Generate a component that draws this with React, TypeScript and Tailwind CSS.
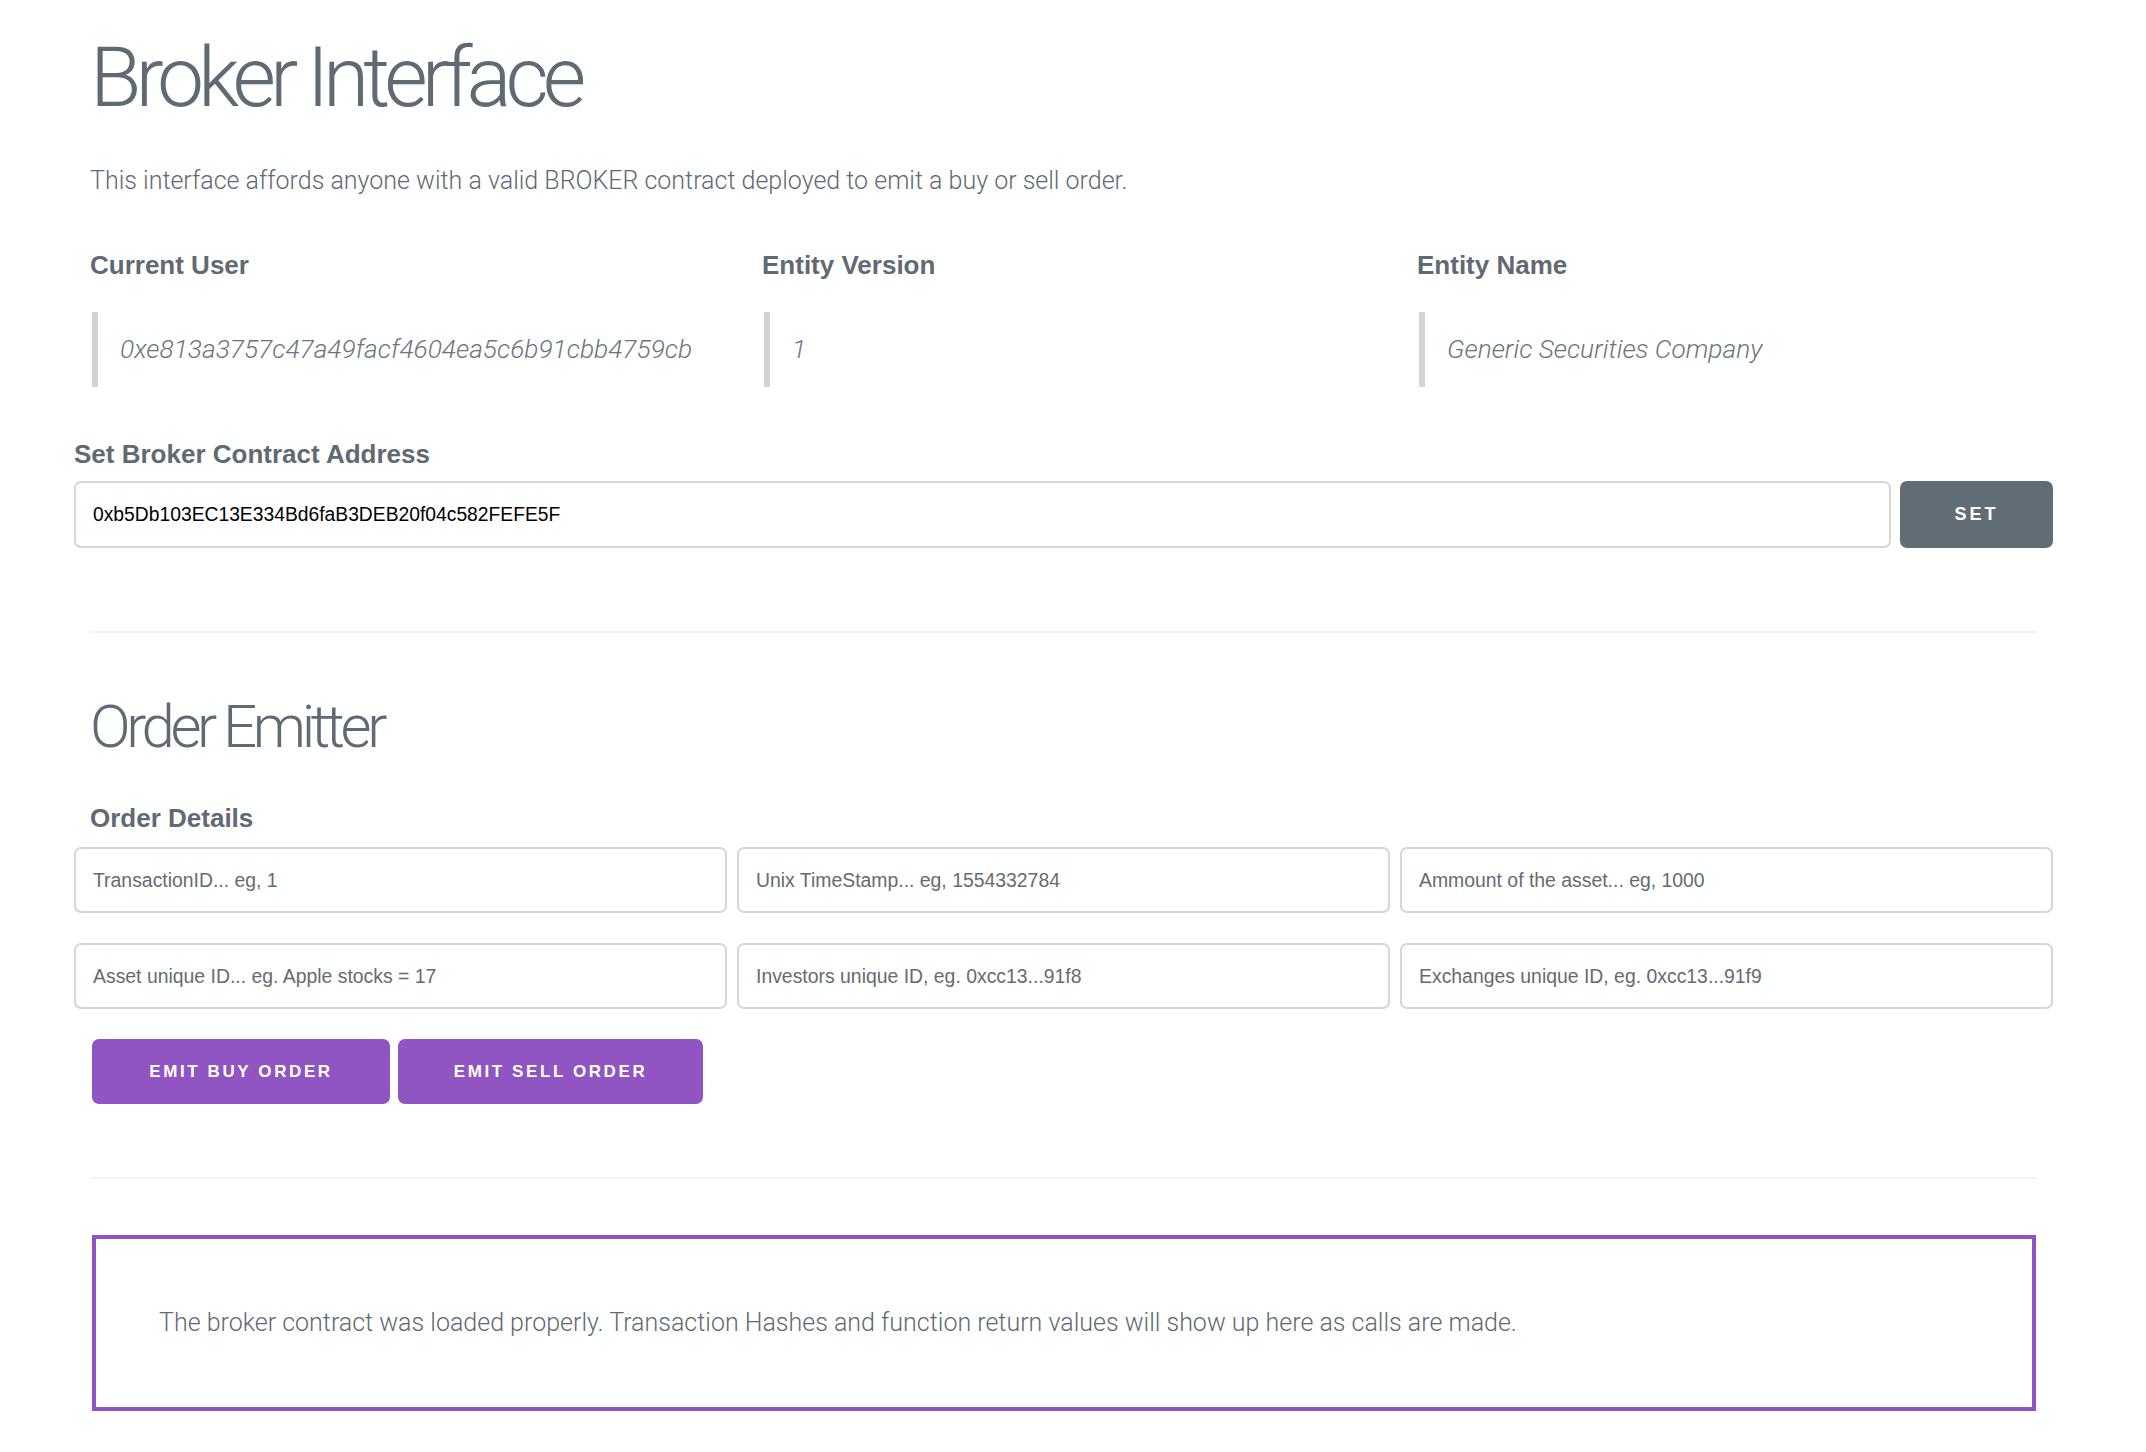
import React from "react";

const light = { fontFamily: "Roboto, 'Liberation Sans', sans-serif" };

function Stat({ label, value, w }: { label: string; value: string; w: string }) {
  return (
    <div className={`${w} shrink-0`}>
      <div className="font-['Liberation_Sans',sans-serif] text-[26px] font-bold leading-none text-[#5f6a73]">{label}</div>
      <div className="ml-[2px] mt-[34px] flex h-[75px] items-center border-l-[6px] border-[#d3d3d3] pl-[22px]">
        <span className="text-[26.3px] font-light italic text-[#6b747c]" style={light}>{value}</span>
      </div>
    </div>
  );
}

function Field({ placeholder }: { placeholder: string }) {
  return (
    <input
      placeholder={placeholder}
      className="h-[66px] w-full rounded-[7px] border-2 border-[#d6d6d6] bg-white px-[17px] font-['Liberation_Sans',sans-serif] text-[19.4px] text-black outline-none placeholder:text-[#666b70]"
    />
  );
}

export default function App() {
  return (
    <div className="min-h-[1452px] w-full bg-white">
      <div className="ml-[74px] w-[1979px]">
        <div className="px-[16px]">
          <h1 className="pt-[36px] text-[84px] font-light leading-none tracking-[-6px] text-[#5f6a73]" style={light}>
            Broker Interface
          </h1>
          <p className="mt-[48px] text-[25px] font-light leading-none text-[#5f6a73]" style={light}>
            This interface affords anyone with a valid BROKER contract deployed to emit a buy or sell order.
          </p>
          <div className="mt-[59px] flex">
            <Stat label="Current User" value="0xe813a3757c47a49facf4604ea5c6b91cbb4759cb" w="w-[672px]" />
            <Stat label="Entity Version" value="1" w="w-[655px]" />
            <Stat label="Entity Name" value="Generic Securities Company" w="flex-1" />
          </div>
        </div>

        <div className="mt-[54px] font-['Liberation_Sans',sans-serif] text-[26px] font-bold leading-none text-[#5f6a73]">
          Set Broker Contract Address
        </div>
        <div className="mt-[14px] flex gap-[9px]">
          <input
            defaultValue="0xb5Db103EC13E334Bd6faB3DEB20f04c582FEFE5F"
            className="h-[67px] flex-1 rounded-[7px] border-2 border-[#d6d6d6] bg-white px-[17px] font-['Liberation_Sans',sans-serif] text-[19.3px] text-black outline-none"
          />
          <button className="h-[67px] w-[153px] rounded-[7px] bg-[#626c75] font-['Liberation_Sans',sans-serif] text-[18px] font-bold tracking-[3px] text-white">
            SET
          </button>
        </div>

        <div className="mx-[16px] mt-[83px] h-[2px] bg-[#f2f2f2]" />

        <div className="px-[16px]">
          <h2 className="mt-[64px] text-[60px] font-light leading-none tracking-[-4.4px] text-[#5f6a73]" style={light}>
            Order Emitter
          </h2>
          <div className="mt-[48px] font-['Liberation_Sans',sans-serif] text-[26px] font-bold leading-none text-[#5f6a73]">
            Order Details
          </div>
        </div>

        <div className="mt-[16px] grid grid-cols-3 gap-x-[10px] gap-y-[30px]">
          <Field placeholder="TransactionID... eg, 1" />
          <Field placeholder="Unix TimeStamp... eg, 1554332784" />
          <Field placeholder="Ammount of the asset... eg, 1000" />
          <Field placeholder="Asset unique ID... eg. Apple stocks = 17" />
          <Field placeholder="Investors unique ID, eg. 0xcc13...91f8" />
          <Field placeholder="Exchanges unique ID, eg. 0xcc13...91f9" />
        </div>

        <div className="ml-[18px] mt-[30px] flex gap-[8px]">
          <button className="h-[65px] w-[298px] rounded-[7px] bg-[#9155c3] font-['Liberation_Sans',sans-serif] text-[17px] font-bold tracking-[2.6px] text-white">
            EMIT BUY ORDER
          </button>
          <button className="h-[65px] w-[305px] rounded-[7px] bg-[#9155c3] font-['Liberation_Sans',sans-serif] text-[17px] font-bold tracking-[2.6px] text-white">
            EMIT SELL ORDER
          </button>
        </div>

        <div className="mx-[16px] mt-[73px] h-[2px] bg-[#f2f2f2]" />

        <div className="ml-[18px] mr-[17px] mt-[56px] flex h-[176px] items-center border-[4px] border-[#9155c3] pl-[63px]">
          <span className="text-[25px] font-light text-[#5f6a73]" style={light}>
            The broker contract was loaded properly. Transaction Hashes and function return values will show up here as calls are made.
          </span>
        </div>
      </div>
    </div>
  );
}
